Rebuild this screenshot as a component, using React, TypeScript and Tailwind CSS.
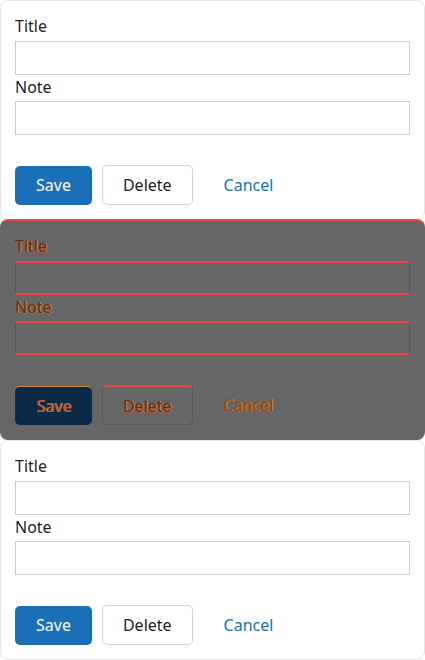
import React from "react";

type CardProps = { dark?: boolean };

function NoteCard({ dark = false }: CardProps) {
  const label = dark
    ? "block h-[22px] text-[16px] leading-[22px] text-[#5a3218] [text-shadow:1px_0_0_#d2862e,0_1px_0_#c0503a]"
    : "block h-[22px] text-[16px] leading-[22px] text-[#222]";
  const input = dark
    ? "block h-[34px] w-full border-x border-x-[#555] border-y-2 border-y-[#ef4444] bg-transparent"
    : "block h-[34px] w-full border border-[#ccc] bg-white";

  return (
    <div
      className={
        dark
          ? "h-[221px] rounded-lg border-t-2 border-[#ef4444] bg-[#666666] px-[15px] pt-[14px]"
          : "h-[220px] rounded-lg border border-[#e5e5e5] bg-white px-[14px] pt-[14px]"
      }
    >
      <label className={label}>Title</label>
      <div className="mt-[4px]">
        <input className={input} />
      </div>
      <label className={`${label} mt-[1px]`}>Note</label>
      <div className="mt-[3px]">
        <input className={input} />
      </div>
      <div className="mt-[30px] flex items-center gap-[10px]">
        <button
          className={
            dark
              ? "h-[39px] rounded-[5px] border-t border-[#d08a3a] bg-[#0b2a48] px-[21px] text-[16px] text-[#c8503a] [text-shadow:1px_0_0_#d2862e]"
              : "h-[39px] rounded-[5px] bg-[#1a6fb7] px-[21px] text-[16px] text-white"
          }
        >
          Save
        </button>
        <button
          className={
            dark
              ? "h-[40px] rounded-[5px] border border-[#575757] border-t-2 border-t-[#ef4444] px-[20px] text-[16px] text-[#5a3218] [text-shadow:1px_0_0_#d2862e,0_1px_0_#c0503a]"
              : "h-[40px] rounded-[5px] border border-[#d4d4d4] bg-white px-[20px] text-[16px] text-[#222]"
          }
        >
          Delete
        </button>
        <button
          className={
            dark
              ? "h-[40px] px-[21px] text-[16px] text-[#8a4a1a] [text-shadow:1px_0_0_#d2862e,0_1px_0_#c0503a]"
              : "h-[40px] px-[21px] text-[16px] text-[#1a6fb7]"
          }
        >
          Cancel
        </button>
      </div>
    </div>
  );
}

export default function App() {
  return (
    <div className="flex h-[660px] w-[425px] flex-col overflow-hidden bg-white font-['Noto_Sans',sans-serif]">
      <div className="-mb-px">
        <NoteCard />
      </div>
      <NoteCard dark />
      <NoteCard />
    </div>
  );
}
